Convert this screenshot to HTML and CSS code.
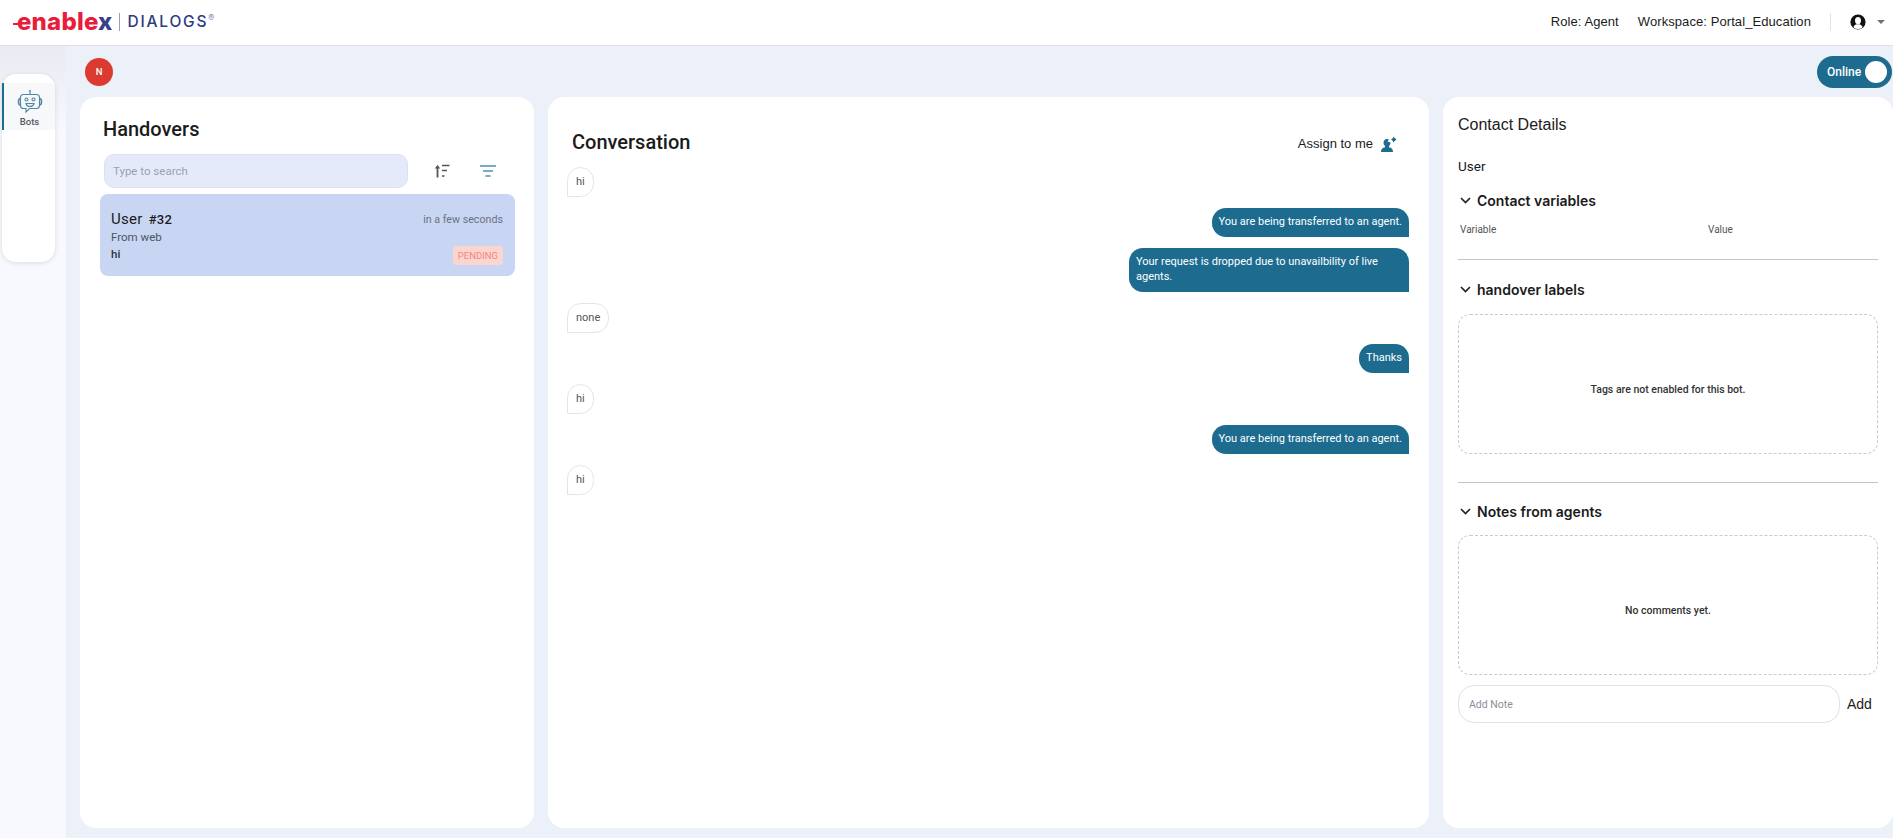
FILE: index.html
```html
<!DOCTYPE html>
<html lang="en">
  <head>
    <meta charset="UTF-8" />
    <title>Dialogs - Handovers</title>
    <link rel="stylesheet" href="styles.css">
  </head>
  <body>
    <header class="topbar">
      <div class="logo">
        <span class="logo-mark">enable<span class="logo-x">x</span></span>
        <span class="logo-sep"></span>
        <span class="logo-name">DIALOGS<sup>®</sup></span>
      </div>
      <div class="topbar-right">
        <span class="topbar-role">Role: Agent</span>
        <span class="topbar-workspace">Workspace: Portal_Education</span>
        <span class="topbar-sep"></span>
        <svg class="user-icon" width="16" height="16" viewBox="0 0 16 16">
          <circle cx="8" cy="8" r="7.6" fill="#111" />
          <ellipse cx="8" cy="6.6" rx="3" ry="3.7" fill="#fff" />
          <path d="M3.4 13.2c.5-2 2-2.6 3.3-3h2.600c1.300.4 2.800 1 3.300 3A6.600 6.600 0 0 1 3.400 13.200z" fill="#fff" />
        </svg>
        <span class="caret"></span>
      </div>
    </header>

    <div class="layout">
      <aside class="sidebar">
        <nav class="side-card">
          <div class="side-item">
            <svg width="26" height="26" viewBox="0 0 26 26" fill="none" stroke="#4d88a6" stroke-width="1.100">
              <circle cx="13" cy="2" r="1" fill="#4d88a6" stroke="none" />
              <path d="M13 3v2.500" />
              <path d="M6.500 5.500h13a3 3 0 0 1 3 3v8a3 3 0 0 1-3 3h-7l-3.500 3.500v-3.500h-2.500a3 3 0 0 1-3-3v-8a3 3 0 0 1 3-3z" />
              <path d="M3.500 9.500c-1.500 0-2 1-2 3.200s.5 3.300 2 3.300" stroke-width="1.600" />
              <path d="M22.500 9.500c1.500 0 2 1 2 3.200s-.5 3.300-2 3.300" stroke-width="1.600" />
              <circle cx="9.500" cy="10.500" r="1.500" />
              <circle cx="16.500" cy="10.500" r="1.500" />
              <path d="M9 14.500h8c-.5 2-2 3-4 3s-3.500-1-4-3z" />
            </svg>
            <span class="side-label">Bots</span>
          </div>
        </nav>
      </aside>

      <main class="content">
        <div class="status-row">
          <span class="avatar">N</span>
          <div class="toggle">
            <span class="toggle-label">Online</span>
            <span class="toggle-knob"></span>
          </div>
        </div>

        <div class="panels">
          <section class="panel panel-list">
            <h2 class="panel-title">Handovers</h2>
            <div class="search-row">
              <input class="search" type="text" placeholder="Type to search" />
              <svg class="sort-icon" width="16" height="14" viewBox="0 0 16 14" fill="none" stroke="#555" stroke-width="1.300">
                <path d="M3.500 13.500V2" stroke-width="1.800" />
                <path d="M.8 4.500 3.500 1l2.700 3.500z" fill="#555" stroke="none" />
                <path d="M8 1.500h7.500M8 6.500h5M8 12h2.500" />
              </svg>
              <svg class="filter-icon" width="16" height="12" viewBox="0 0 16 12" fill="none" stroke="#4a93b0" stroke-width="1.300">
                <path d="M0 1h16M3 6h10M5.500 11h5" />
              </svg>
            </div>
            <div class="handover">
              <div class="handover-top">
                <span class="handover-user">User <b>#32</b></span>
                <span class="handover-time">in a few seconds</span>
              </div>
              <div class="handover-from">From web</div>
              <div class="handover-bottom">
                <span class="handover-msg">hi</span>
                <span class="badge">PENDING</span>
              </div>
            </div>
          </section>

          <section class="panel panel-chat">
            <div class="chat-head">
              <h2 class="panel-title">Conversation</h2>
              <div class="assign">
                <span>Assign to me</span>
                <svg width="17" height="16" viewBox="0 0 17 16" fill="#1d6c8f">
                  <path d="M1 16c0-3 1.500-4.200 4-4.800V10a4 4 0 0 1-1.500-3.200C3.500 4.500 5 3 7 3c.8 0 1.500.2 2 .6L7.500 5.500l3 1c0 1.500-.5 2.700-1.500 3.500v1.200c2.500.6 4 1.800 4 4.800z" />
                  <path d="M11 3.500 13 2V0.500l3.500 3-3.500 3V5z" />
                </svg>
              </div>
            </div>
            <div class="messages">
              <div class="msg msg-in">hi</div>
              <div class="msg msg-out">You are being transferred to an agent.</div>
              <div class="msg msg-out">Your request is dropped due to unavailbility of live agents.</div>
              <div class="msg msg-in">none</div>
              <div class="msg msg-out">Thanks</div>
              <div class="msg msg-in">hi</div>
              <div class="msg msg-out">You are being transferred to an agent.</div>
              <div class="msg msg-in">hi</div>
            </div>
          </section>

          <section class="panel panel-details">
            <h3 class="details-title">Contact Details</h3>
            <div class="details-user">User</div>

            <div class="group-head">
              <svg class="chevron" width="11" height="7" viewBox="0 0 11 7" fill="none" stroke="#222" stroke-width="1.700"><path d="M1 1l4.500 4.500L10 1" /></svg>
              <span>Contact variables</span>
            </div>
            <div class="var-row">
              <span class="var-name">Variable</span>
              <span>Value</span>
            </div>
            <hr class="rule rule-vars" />

            <div class="group-head">
              <svg class="chevron" width="11" height="7" viewBox="0 0 11 7" fill="none" stroke="#222" stroke-width="1.700"><path d="M1 1l4.500 4.500L10 1" /></svg>
              <span>handover labels</span>
            </div>
            <div class="empty-box">Tags are not enabled for this bot.</div>
            <hr class="rule rule-labels" />

            <div class="group-head group-notes">
              <svg class="chevron" width="11" height="7" viewBox="0 0 11 7" fill="none" stroke="#222" stroke-width="1.700"><path d="M1 1l4.500 4.500L10 1" /></svg>
              <span>Notes from agents</span>
            </div>
            <div class="empty-box empty-notes">No comments yet.</div>
            <div class="note-row">
              <input class="note-input" type="text" placeholder="Add Note" />
              <span class="note-add">Add</span>
            </div>
          </section>
        </div>
      </main>
    </div>
  </body>
</html>
```

FILE: styles.css
```css
* {
  box-sizing: border-box;
}

html,
body {
  height: 100%;
}

body {
  display: flex;
  flex-direction: column;
  margin: 0;
  overflow: hidden;
  background-color: #ecf0f8;
  font-family: Roboto, "Liberation Sans", sans-serif;
  color: #1b1b1b;
}

/* top bar */
.topbar {
  display: flex;
  align-items: center;
  justify-content: space-between;
  flex: none;
  height: 46px;
  padding: 0 8px 2px 13px;
  background-color: #fff;
  border-bottom: 1px solid #dfe0e4;
}

.logo {
  display: flex;
  align-items: center;
}

.logo-mark {
  position: relative;
  padding-left: 4px;
  font-family: Inter, sans-serif;
  font-size: 24px;
  font-weight: 800;
  letter-spacing: 0.2px;
  line-height: 28px;
  color: #ea1c3c;
}

/* little dash in front of the e */
.logo-mark::before {
  content: "";
  position: absolute;
  left: 0;
  top: 15px;
  width: 5px;
  height: 2px;
  background-color: #ea1c3c;
}

.logo-x {
  color: #39408a;
}

.logo-sep {
  width: 1px;
  height: 18px;
  margin: 0 8px 0 6px;
  background-color: #9aa0bb;
}

.logo-name {
  font-family: Inter, sans-serif;
  font-size: 15.500px;
  font-weight: 500;
  letter-spacing: 1.800px;
  color: #2e3a7f;
}

.logo-name sup {
  font-size: 9px;
  line-height: 0;
  color: #8a90b8;
}

.topbar-right {
  display: flex;
  align-items: center;
  font-family: "Liberation Sans", sans-serif;
  font-size: 13px;
  letter-spacing: 0.08px;
}

.topbar-role {
  margin-right: 19px;
}

.topbar-sep {
  width: 1px;
  height: 18px;
  margin: 0 19px;
  background-color: #e3e3e3;
}

.caret {
  width: 0;
  height: 0;
  margin-left: 11px;
  border-top: 4px solid #6b7280;
  border-left: 4px solid transparent;
  border-right: 4px solid transparent;
}

/* page body */
.layout {
  display: flex;
  flex: 1;
  min-height: 0;
}

.sidebar {
  flex: none;
  width: 66px;
  padding: 28px 11px 0 2px;
  background: linear-gradient(#e9ebf2, #f8f9fe 90px);
}

.side-card {
  height: 188px;
  padding-top: 9px;
  background-color: #fff;
  border-radius: 14px;
  box-shadow: 0 1px 5px rgba(0, 0, 0, 0.12);
}

.side-item {
  display: flex;
  flex-direction: column;
  align-items: center;
  height: 47px;
  padding-top: 6px;
  background-color: #f7f8fa;
  border-left: 2px solid #1d6c8f;
}

.side-label {
  margin-top: 1px;
  font-size: 9.500px;
  font-weight: 500;
  color: #4f5b66;
}

.content {
  display: flex;
  flex-direction: column;
  flex: 1;
  min-width: 0;
  padding: 0 0 10px 14px;
}

.status-row {
  display: flex;
  align-items: center;
  justify-content: space-between;
  flex: none;
  height: 51px;
  padding: 0 1px 0 5px;
}

.avatar {
  display: flex;
  align-items: center;
  justify-content: center;
  width: 28px;
  height: 28px;
  border-radius: 50%;
  background-color: #db3a30;
  color: #fff;
  font-size: 9.500px;
  font-weight: 500;
}

.toggle {
  display: flex;
  align-items: center;
  justify-content: space-between;
  width: 75px;
  height: 32px;
  padding: 0 5px 0 10px;
  border-radius: 16px;
  background-color: #1d6c8f;
  color: #fff;
  font-size: 12px;
  font-weight: 500;
}

.toggle-knob {
  width: 22px;
  height: 22px;
  border-radius: 50%;
  background-color: #fff;
}

.panels {
  display: flex;
  flex: 1;
  gap: 14px;
  min-height: 0;
}

.panel {
  background-color: #fff;
  border-radius: 16px;
}

.panel-list {
  flex: none;
  width: 454px;
  padding: 0 20px;
}

.panel-chat {
  flex: none;
  width: 881px;
  padding: 0 20px 0 19px;
}

.panel-details {
  flex: 1;
  min-width: 0;
  padding: 0 15px 0 15px;
}

.panel-title {
  margin: 0;
  font-size: 20px;
  font-weight: 500;
  line-height: 24px;
}

/* handovers */
.panel-list .panel-title {
  padding: 20px 0 0 3px;
}

.search-row {
  display: flex;
  align-items: center;
  margin-top: 13px;
  padding-left: 4px;
}

.search {
  width: 304px;
  height: 34px;
  padding: 0 8px;
  background-color: #e5eafb;
  border: 1px solid #dde2f1;
  border-radius: 10px;
  font-family: inherit;
  font-size: 11.500px;
  outline: none;
}

.search::placeholder {
  color: #99a1b3;
}

.sort-icon {
  margin-left: 26px;
}

.filter-icon {
  margin-left: 30px;
}

.handover {
  width: 415px;
  margin-top: 6px;
  height: 82px;
  padding: 16px 12px 0 11px;
  background-color: #c9d6f3;
  border-radius: 8px;
}

.handover-top,
.handover-bottom {
  display: flex;
  align-items: center;
  justify-content: space-between;
}

.handover-user {
  font-size: 15px;
  line-height: 18px;
  letter-spacing: 0.3px;
}

.handover-user b {
  margin-left: 2px;
  font-size: 13px;
  font-weight: 500;
}

.handover-time {
  font-size: 10.700px;
  color: #6b7280;
}

.handover-from {
  margin-top: 1px;
  font-size: 11.500px;
  line-height: 14px;
  color: #4b5563;
}

.handover-bottom {
  height: 19px;
  align-items: flex-start;
}

.handover-msg {
  margin-top: 3px;
  font-size: 11.500px;
  font-weight: 500;
  line-height: 14px;
  color: #333;
}

.badge {
  margin-top: 2px;
  padding: 0 5px;
  background-color: #fbd5cf;
  border-radius: 3px;
  color: #f5877a;
  font-size: 9.500px;
  line-height: 19px;
}

/* conversation */
.chat-head {
  display: flex;
  align-items: center;
  justify-content: space-between;
  height: 70px;
  padding: 20px 12px 0 5px;
}

.assign {
  display: flex;
  align-items: center;
  gap: 7px;
  padding-top: 3px;
  font-family: "Liberation Sans", sans-serif;
  font-size: 13px;
}

.messages {
  display: flex;
  flex-direction: column;
  gap: 11px;
}

.msg {
  max-width: 280px;
  padding: 7.250px 7px;
  font-size: 11px;
  line-height: 14.500px;
}

.msg-in {
  align-self: flex-start;
  padding: 7px 8px;
  line-height: 14px;
  border: 1px solid #e4e4e4;
  border-radius: 14px 14px 14px 0;
  color: #555;
}

.msg-out {
  align-self: flex-end;
  background-color: #1d6c8f;
  border-radius: 14px 14px 0 14px;
  color: #fff;
}

/* contact details */
.details-title {
  margin: 0;
  padding-top: 18px;
  font-family: "Liberation Sans", sans-serif;
  font-size: 16px;
  font-weight: 400;
  line-height: 19px;
}

.details-user {
  margin-top: 24px;
  font-size: 13.500px;
  line-height: 16px;
}

.group-head {
  display: flex;
  align-items: center;
  gap: 6px;
  height: 18px;
  margin-top: 17px;
  padding-left: 2px;
  font-family: Inter, sans-serif;
  font-size: 14px;
  font-weight: 600;
}

.var-row {
  display: flex;
  margin-top: 15px;
  padding-left: 2px;
  font-size: 10px;
  line-height: 12px;
  color: #555;
}

.var-name {
  width: 248px;
}

.rule {
  margin: 0;
  border: 0;
  border-top: 1px solid #bfc5cc;
}

.rule-vars {
  margin-top: 23px;
}

.rule + .group-head {
  margin-top: 20px;
}

.rule + .group-notes {
  margin-top: 19px;
}

.empty-box {
  display: flex;
  align-items: center;
  justify-content: center;
  height: 140px;
  margin-top: 16px;
  padding-top: 10px;
  border: 1px dashed #c9c9c9;
  border-radius: 12px;
  font-size: 10.500px;
  font-weight: 500;
  color: #333;
}

.empty-notes {
  margin-top: 15px;
}

.rule-labels {
  margin-top: 28px;
}

.note-row {
  display: flex;
  align-items: center;
  margin-top: 10px;
}

.note-input {
  width: 382px;
  height: 38px;
  padding: 0 10px;
  background-color: #fff;
  border: 1px solid #e1e1e1;
  border-radius: 16px;
  font-family: inherit;
  font-size: 10.500px;
  outline: none;
}

.note-input::placeholder {
  color: #8a8f98;
}

.note-add {
  margin-left: 7px;
  font-family: "Liberation Sans", sans-serif;
  font-size: 14px;
}
```
